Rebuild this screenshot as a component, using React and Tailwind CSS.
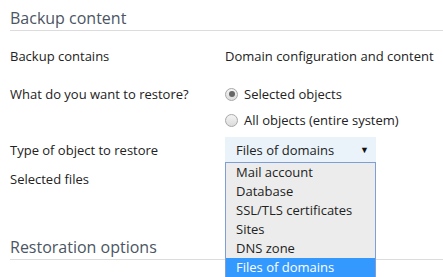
export default function App() {
  const options = [
    "Mail account",
    "Database",
    "SSL/TLS certificates",
    "Sites",
    "DNS zone",
    "Files of domains",
  ];
  const selected = "Files of domains";

  return (
    <div className="relative w-[443px] h-[277px] overflow-hidden bg-white pl-[10px] font-['Open_Sans',sans-serif] text-[13px] leading-[18px] text-[#222]">
      <h2 className="pt-[6px] text-[16px] leading-[24px] text-[#4b5563] border-b border-[#dcdcdc]">
        Backup content
      </h2>

      <div className="mt-[16px] flex">
        <div className="w-[215px] shrink-0">Backup contains</div>
        <div>Domain configuration and content</div>
      </div>

      <div className="mt-[20px] flex">
        <div className="w-[215px] shrink-0">What do you want to restore?</div>
        <div className="flex flex-col gap-[8px]">
          <label className="flex items-center gap-[6px]">
            <span className="flex h-[13px] w-[13px] items-center justify-center rounded-full border border-[#a8a8a8] bg-gradient-to-b from-[#f4f4f4] to-[#dcdcdc]">
              <span className="h-[6px] w-[6px] rounded-full bg-[#666]" />
            </span>
            Selected objects
          </label>
          <label className="flex items-center gap-[6px]">
            <span className="h-[13px] w-[13px] rounded-full border border-[#a8a8a8] bg-gradient-to-b from-[#f4f4f4] to-[#dcdcdc]" />
            All objects (entire system)
          </label>
        </div>
      </div>

      <div className="mt-[8px] flex items-center">
        <div className="w-[215px] shrink-0">Type of object to restore</div>
        <div className="relative">
          <div className="flex h-[25px] w-[151px] items-center justify-between bg-[#eaf3fa] pl-[11px] pr-[7px]">
            <span>{selected}</span>
            <span className="text-[9px] leading-none text-[#111]">▼</span>
          </div>
          <ul className="absolute left-0 top-full z-10 w-[151px] border border-[#7f9ed6] bg-[#ececec]">
            {options.map((o) => (
              <li
                key={o}
                className={
                  o === selected
                    ? "h-[19px] pl-[10px] leading-[19px] bg-[#3399ff] text-white"
                    : "h-[19px] pl-[10px] leading-[19px]"
                }
              >
                {o}
              </li>
            ))}
          </ul>
        </div>
      </div>

      <div className="mt-[8px] flex">
        <div className="w-[215px] shrink-0">Selected files</div>
      </div>

      <h2 className="mt-[47px] text-[16px] leading-[24px] text-[#4b5563] border-b border-[#dcdcdc]">
        Restoration options
      </h2>
    </div>
  );
}
